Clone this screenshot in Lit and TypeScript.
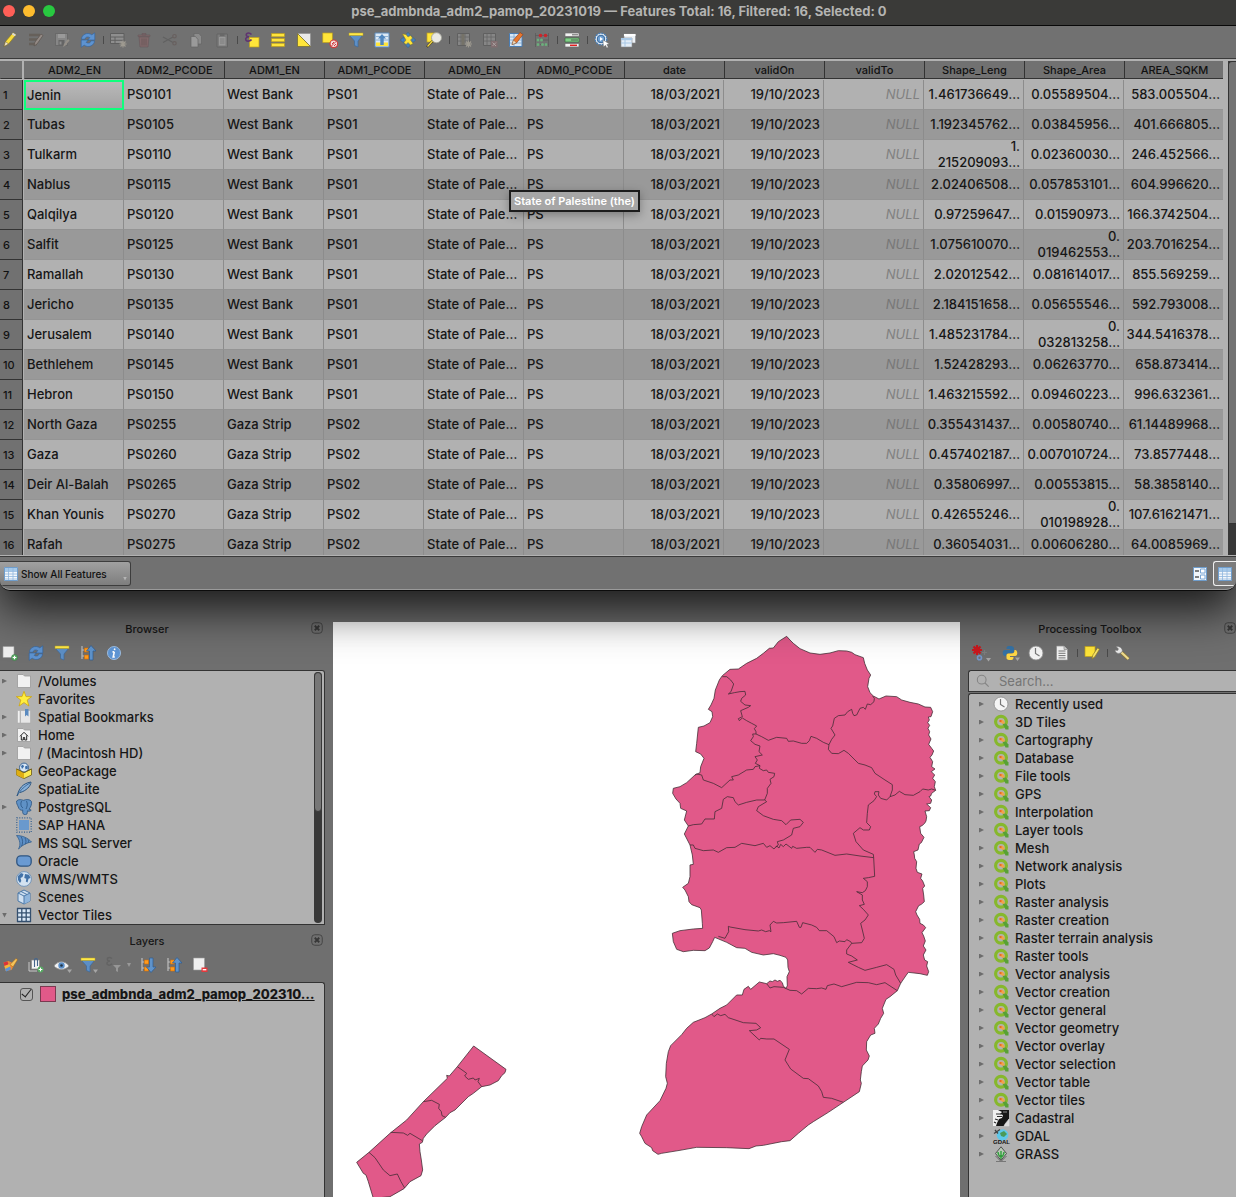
import { LitElement, html, css, svg, nothing } from "lit";
import { customElement, property } from "lit/decorators.js";

const funnel = svg`<path d="M1.500 3.500h13L10 9v6l-3.500-1.500V9z" fill="#5d8fc6" stroke="#3c6899" stroke-width=".7"/><path d="M1 1h14v2.500H1z" fill="#ffe94a" stroke="#b9a020" stroke-width=".5"/>`;
const more = svg`<path d="M13 12.500h5L15.500 16z" fill="#a6a6a6"/>`;
const refresh = svg`<path d="M1.500 7.200C1.500 2.500 7.500-.3 11.800 2.800L14.800.8V8H7.800L9.800 5.600C7.500 4.200 5.500 5 4.900 7.200zM14.500 8.800c0 4.700-6 7.500-10.300 4.400L1.200 15.200V8H8.200L6.200 10.400c2.300 1.400 4.300.6 4.900-1.600z" fill="#5e93d0" stroke="#30629c" stroke-width=".6"/>`;
const branch = svg`<path d="M2 1v13M2 5h5M2 11h5" stroke="#bdbdbd" stroke-width="1.200" fill="none"/><path d="M4.500 3h4v4h-4zM4.500 10h4v4h-4z" fill="#ff9b1c" stroke="#d46b00" stroke-width=".6"/>`;
const arrowUp = svg`<path d="M11 .5L16 6h-3v9H9.500V6H6.500z" fill="#5f93cb" stroke="#2e5c91" stroke-width=".7"/>`;
const arrowDown = svg`<path d="M11 15.500L16 10h-3V1H9.500v9H6.500z" fill="#5f93cb" stroke="#2e5c91" stroke-width=".7"/>`;
const folder = svg`<path d="M1.500 1.500h5.500l1.500 1.500h6V14.500h-13z" fill="#f1f1f1" stroke="#999" stroke-width=".8"/>`;
const grid = svg`<path d="M1.500 1.500h13v13h-13z" fill="#f3f7fb" stroke="#6f9dcc"/><path d="M2 2h12v3H2z" fill="#a5c9ea"/><path d="M2 5.500h12M2 8h12M2 10.500h12M2 13h12" stroke="#8fb6de" stroke-width=".8"/><path d="M5.500 2v12M10 2v12" stroke="#8fb6de" stroke-width=".8"/>`;
const clock = svg`<circle cx="8" cy="8" r="7" fill="#f4f4f4" stroke="#8b8b8b" stroke-width=".8"/><path d="M7.500 3v5.500l4 2.500" fill="none" stroke="#777" stroke-width="1.200"/>`;
const yellow = (x: number, y: number, s: number) =>
  svg`<rect x=${x} y=${y} width=${s} height=${s} fill="#ffe53a" stroke="#c1a21a" stroke-width=".7"/>`;

const ICONS: Record<string, unknown> = {
  edit: svg`<path d="M2 14.500l1.500-5L11 .8l3 2L6.500 12z" fill="#f8dc3c" stroke="#8f7c22" stroke-width=".7"/><path d="M2 14.500l1.500-5L6.500 12z" fill="#f4e7c6" stroke="#5c5137" stroke-width=".5"/><path d="M11 .8l3 2-1.200 1.500-3-2z" fill="#d9d9d9"/>`,
  multi: svg`<path d="M1 3h11M1 7.500h10M1 12h8" stroke="#66605a" stroke-width="2.600"/><path d="M6 14l1-4 6-8 2 1.500L9 12z" fill="#948b86" stroke="#5b534e" stroke-width=".7"/>`,
  save: svg`<path d="M1.500 1.500h12v12h-12z" fill="#868686" stroke="#616161" stroke-width=".7"/><path d="M4 2h7v4H4z" fill="#9a9a9a"/><path d="M4.500 8h6v5.500h-6z" fill="#656565"/><path d="M5.500 9.500h2v3h-2z" fill="#8d8d8d"/><path d="M9 15l1-3 4-5 1.500 1.500-4 5z" fill="#948f88"/>`,
  refresh,
  addRow: svg`<path d="M.5 1.500h13.500v10H.5z" fill="#8e8e8e" stroke="#5e5e5e"/><path d="M1 5h13M1 8.300h13M5 5v6.500" stroke="#616161" stroke-width="1"/><path d="M13 8.500v7M9.500 12h7M10.500 9.500l5 5M15.500 9.500l-5 5" stroke="#9e9a90" stroke-width="1.200"/>`,
  trash: svg`<path d="M3 5h10l-1 10H4zM2 3h12v1.500H2zM6 1.500h4V3H6z" fill="#81686a" stroke="#67575a" stroke-width=".6"/><path d="M6 6.500v7M8 6.500v7M10 6.500v7" stroke="#655557" stroke-width=".8"/>`,
  cut: svg`<path d="M1 5l10 5.500M1 10.500L11 5" stroke="#616161" stroke-width="1.200"/><circle cx="12.500" cy="4.200" r="1.700" fill="none" stroke="#68605f" stroke-width="1.200"/><circle cx="12.500" cy="11.300" r="1.700" fill="none" stroke="#68605f" stroke-width="1.200"/>`,
  copy: svg`<path d="M6 1.500h5l2.500 3V12H6z" fill="#8b8b8b" stroke="#666" stroke-width=".7"/><path d="M3 4.500h4.500l2.500 3V15H3z" fill="#9a9a9a" stroke="#666" stroke-width=".7"/>`,
  paste: svg`<path d="M3 2h10.500v13H3z" fill="#7c7c7c" stroke="#646464"/><path d="M5 5h6.500v8.500H5z" fill="#989898"/><path d="M6 1h4.500v3H6z" fill="#686868"/><path d="M6 7h4.500M6 9h4.500M6 11h4.500" stroke="#777" stroke-width=".8"/>`,
  expr: svg`${yellow(5.5, 5.5, 9.5)}<path d="M7.500 2.500C5-.2 1.200 1.200 2.500 3.700c.6.9 1.700 1 2.600 1C3 5 .8 6 2 8.200 3.500 10 6.500 9 7.500 7.500" fill="none" stroke="#5f3470" stroke-width="1.600"/>`,
  all: svg`<path d="M1.500 1.500h13v3.300h-13zM1.500 6.400h13v3.300h-13zM1.500 11.300h13v3.300h-13z" fill="#ffe53a" stroke="#b99c1e" stroke-width=".7"/>`,
  invert: svg`<path d="M1.500 1.500h13v13z" fill="#e9e9e9" stroke="#8c8c8c" stroke-width=".6"/><path d="M1.500 1.500v13h13z" fill="#ffe53a" stroke="#6d6530" stroke-width=".7"/>`,
  deselect: svg`${yellow(0.8, 1, 9.5)}<circle cx="11.800" cy="11.800" r="3.800" fill="#f3dede" stroke="#cf3b3b" stroke-width="1.200"/><path d="M9.200 14.300l5.200-5.200M10 12l2-2M12 14l2-2" stroke="#cf3b3b" stroke-width="1"/>`,
  funnel,
  top: svg`<path d="M1 1h14v14H1z" fill="#dce9f5" stroke="#5d8cbd"/><path d="M1.500 4.500h13M1.500 8h13" stroke="#8fb2d4"/><path d="M2 10.500h12v3.500H2z" fill="#ffe53a"/><path d="M8 2l4 4.500H9.700V13H6.300V6.500H4z" fill="#4f87c0"/>`,
  pan: svg`<path d="M8 .3L11.200 4H4.800zM8 15.700L11.200 12H4.800zM.3 8L4 4.800v6.400zM15.700 8L12 4.800v6.400z" fill="#4a80b8" stroke="#2d5c8f" stroke-width=".5"/><path d="M6.500 3.500h3v9h-3zM3.500 6.500h9v3h-9z" fill="#4a80b8"/><path d="M2.500 2l3.500.5 2 2.500 2.500-1.500L12.500 6l-2 2 2.500 3.500-2.500 1.500L8 10.500 6 12.500 4 10.500 6 8z" fill="#ffe53a" stroke="#8a7b1e" stroke-width=".5"/>`,
  zoom: svg`${yellow(1, 1, 9)}<path d="M1 15l6.500-7" stroke="#3b3522" stroke-width="2.400"/><path d="M1.500 14.500l5-5.500" stroke="#f5db46" stroke-width="1.300"/><circle cx="10.500" cy="5.700" r="5" fill="#e9e9e2" stroke="#a3a39a" stroke-width=".9"/>`,
  newField: svg`<path d="M1.500 1.500h12v12h-12z" fill="#868686" stroke="#606060"/><path d="M5 2v11M9 2v11M2 5h11M2 9h11" stroke="#666" stroke-width=".8"/><path d="M5.500 2h3v11h-3z" fill="#757268"/><path d="M12.500 8.500v7M9 12h7M10 9.500l5 5M15 9.500l-5 5" stroke="#9d998f" stroke-width="1.200"/>`,
  delField: svg`<path d="M1.500 1.500h12v12h-12z" fill="#868686" stroke="#606060"/><path d="M5 2v11M9 2v11M2 5h11M2 9h11" stroke="#666" stroke-width=".8"/><path d="M9 9h6.500v6.500H9z" fill="#826e70"/><path d="M10.500 10.500l3.500 3.500M14 10.500l-3.500 3.500" stroke="#aaa2a1"/>`,
  organize: svg`<path d="M1.500 1.500h12.500v13H1.500z" fill="#d7e7f6" stroke="#4a7db3"/><path d="M2 5h12M2 8h12M2 11h12M6 2v12" stroke="#7ba6d1" stroke-width=".8"/><path d="M4 12.500l1.500-4.500L12 .5l3 2L8.500 11z" fill="#e8762d" stroke="#8a3b10" stroke-width=".6"/><path d="M4 12.500l1.500-4.500 3 3z" fill="#f2dfc2" stroke="#6b4c30" stroke-width=".4"/>`,
  calc: svg`<path d="M1 3.500h14M1 8h14M1 12.500h14M1.500 1v14M14.500 1v14" stroke="#5c5c5c" stroke-width=".8"/><circle cx="6.500" cy="3.500" r="1.800" fill="#c9262b"/><circle cx="11.500" cy="3.500" r="1.800" fill="#c9262b"/><circle cx="4" cy="8" r="1.500" fill="#6cae7c"/><circle cx="7.500" cy="8" r="1.500" fill="#6cae7c"/><circle cx="4" cy="12.500" r="1.500" fill="#6cae7c"/><circle cx="8.500" cy="12.500" r="1.500" fill="#6cae7c"/><circle cx="12" cy="12.500" r="1.500" fill="#6cae7c"/>`,
  cond: svg`<path d="M1 1h14v3.500H1z" fill="#f1f1f1" stroke="#6d6d6d" stroke-width=".7"/><path d="M1 6h14v4H1z" fill="#7fcf86" stroke="#3d6b42" stroke-width=".7"/><path d="M1 11.500h14V15H1z" fill="#f1f1f1" stroke="#6d6d6d" stroke-width=".7"/><path d="M8 2.800h6M7 8h7" stroke="#444" stroke-width=".8"/><path d="M6 13.300h7" stroke="#e02020" stroke-width="1.500"/>`,
  actions: svg`<circle cx="7" cy="7" r="5.800" fill="#eef3f8" stroke="#4e80b5" stroke-width="1.400" stroke-dasharray="2 1"/><circle cx="7" cy="7" r="3.800" fill="#6ea1d5" stroke="#35669a"/><path d="M6 5l3 2-3 2z" fill="#fff"/><path d="M9 8l6.500 4-2.700.6 1.500 2.600-1.500.7-1.300-2.600L9.500 15z" fill="#fff" stroke="#555" stroke-width=".4"/>`,
  dockWin: svg`<path d="M4 2h11.500v9H4z" fill="#eef3f8" stroke="#8a8a8a" stroke-width=".6"/><path d="M4 2h11.500v2H4z" fill="#fff"/><path d="M1 6h11v9H1z" fill="#e4eef8" stroke="#8a8a8a" stroke-width=".6"/><path d="M1 6h11v2.200H1z" fill="#a8c8e6"/><path d="M1 11h11M5 8v7" stroke="#a8c8e6"/>`,
  table: grid,
  form: svg`<path d="M1.500 1.500h13v13h-13z" fill="#f1f5f9" stroke="#6f9dcc"/><path d="M3 5h4M3 11h4" stroke="#555" stroke-width="1.300"/><path d="M8.500 3h4.500v4H8.500zM8.500 9h4.500v4H8.500z" fill="#fff" stroke="#7aa7d6"/>`,
  addSel: svg`<path d="M1 1.500h11v11H1z" fill="#efefef" stroke="#9c9c9c" stroke-width=".6"/><circle cx="12.500" cy="12.500" r="3" fill="#57ab63" stroke="#3b7d46" stroke-width=".5"/><path d="M12.500 10.700v3.600M10.700 12.500h3.600" stroke="#fff" stroke-width="1.200"/>`,
  remove: svg`<path d="M1.500 1h11v12h-11z" fill="#efefef" stroke="#9c9c9c" stroke-width=".6"/><path d="M9.500 10.500h6v4.500h-6z" fill="#e5393d"/><path d="M10.700 12.700h3.600" stroke="#fff" stroke-width="1.300"/>`,
  collapse: svg`${branch}${arrowUp}`,
  expand: svg`${branch}${arrowDown}`,
  info: svg`<circle cx="8" cy="8" r="6.500" fill="#5f96d6" stroke="#9ebde0"/><path d="M8.800 3.500l-.3 1.700M8.300 6.800L7.200 12h1.600M6.500 6.900h1.800" stroke="#fff" stroke-width="1.600" fill="none"/>`,
  style: svg`<path d="M1.500 5.500l5-1.500 6 3-3 6-6 1z" fill="#ec8a3b"/><path d="M1.500 5.500l4-1 1 3-4 1.500z" fill="#d9333a"/><path d="M2.500 9l5-2 1 3-5 2z" fill="#f2b53b"/><path d="M3 12l5-2.500 1 3-5 2z" fill="#5b93d4"/><path d="M8 7.500L14 1.500l1.500 1.200L11 10z" fill="#f5c35a" stroke="#a35c0c" stroke-width=".5"/>`,
  group: svg`<path d="M1 5v9h8" fill="none" stroke="#c9c9c9"/><path d="M3.500 3h8v9h-8z" fill="#f4f4f4" stroke="#888" stroke-width=".7"/><path d="M6.500 10V3c0-1.800 3-1.800 3 0v6" fill="none" stroke="#44658c" stroke-width="1.100"/><circle cx="12.500" cy="12.500" r="3" fill="#57ab63"/><path d="M12.500 10.700v3.600M10.700 12.500h3.600" stroke="#fff"/>`,
  eye: svg`<path d="M0 9c3-5 11-6 15 0-4 4.500-11 4.500-15 0z" fill="#f1f1f1" stroke="#8d8d8d" stroke-width=".8"/><circle cx="7.500" cy="8.500" r="3.200" fill="#5b8fc9"/><circle cx="7.500" cy="8.500" r="1.300" fill="#234"/>${more}`,
  filterMore: svg`${funnel}${more}`,
  exprOff: svg`<path d="M6 1.500C3-.5.5 1 1.700 3.200c.6.7 1.500.8 2.300.8C2 4.300.3 5.500 1.200 7.300 2.700 9 5 8 6 6.700" fill="none" stroke="#636363" stroke-width="1.500"/><path d="M7 8h8l-3 3v4l-2-1v-3z" fill="#969696"/>`,
  gears: svg`<path d="M5 0v10M0 5h10M1.500 1.500l7 7M8.500 1.500l-7 7" stroke="#c9181e" stroke-width="2.200"/><circle cx="5" cy="5" r="3.200" fill="#c9181e"/><circle cx="7.500" cy="12.800" r="2" fill="none" stroke="#7396cc" stroke-width="1.600"/><path d="M12.500 5v5M10 7.500h5" stroke="#7d7d7d" stroke-width="1.200"/><path d="M14 13h5l-2.500 3.500z" fill="#a6a6a6"/>`,
  python: svg`<path d="M7.500 1C4.500 1 4.500 2.500 4.500 4h3.500v1H3C1 5 .5 7 .8 8.500 1 10.500 2 11 4 11c0-2 .8-3 3-3h3c1.500 0 2-1 2-2V3.500C12 1.500 10 1 7.500 1z" fill="#3572a5"/><path d="M8.500 15c3 0 3-1.500 3-3H8v-1h5c2 0 2.500-2 2.200-3.500C15 5.500 14 5 12.500 5c0 2.500-.8 3.500-3 3.500h-3c-1.500 0-2 1-2 2V13c0 1.500 1.500 2 4 2z" fill="#ffd845"/>${more}`,
  clock,
  doc: svg`<path d="M2.500 1H10l3.500 3.500V15h-11z" fill="#f3f3f3" stroke="#8f8f8f" stroke-width=".7"/><path d="M10 1v3.500h3.500" fill="#ccc" stroke="#8f8f8f" stroke-width=".7"/><path d="M4.500 6h7M4.500 8.300h7M4.500 10.600h7M4.500 12.900h7" stroke="#777" stroke-width="1"/>`,
  editPlace: svg`${yellow(1, 1.5, 10)}<path d="M8 14l.8-4L13.500 3l2 1.300-4.700 7.500z" fill="#f7e36a" stroke="#8f7c22" stroke-width=".7"/>`,
  wrench: svg`<path d="M7.500 7.500L14.500 14" stroke="#8f7a35" stroke-width="3.400"/><path d="M7.500 7.500L14.500 14" stroke="#f0dd90" stroke-width="2.200"/><path d="M2 1.500l2.500 2.300-.8 1.700-2.700-.3C1.500 8 4 9 6.500 8l1.800-1.800C8.500 3.500 6 1 2 1.500z" fill="#ececec" stroke="#7e7e7e" stroke-width=".5"/>`,
  folder,
  star: svg`<path d="M8 .3l2 5.300h5.700L11.200 9l1.700 6L8 11.600 3.100 15l1.700-6L.3 5.600H6z" fill="#ffee3e" stroke="#cfa60d" stroke-width=".8"/>`,
  bookmark: svg`<path d="M1.500 1.500h2.500v12.500H1.500z" fill="#f1f1f1" stroke="#a5a5a5" stroke-width=".5"/><path d="M4.500 1.500H14.500V14h-10z" fill="#e6e6e6" stroke="#a5a5a5" stroke-width=".5"/><path d="M9 0h3.500v7.500L10.700 6 9 7.500z" fill="#5a8abf"/>`,
  home: svg`${folder}<path d="M4 9.300L8 5.300l4 4M5.300 8.500V13h2v-2.500h1.400V13h2V8.500" fill="none" stroke="#222" stroke-width="1"/>`,
  gpkg: svg`<path d="M.5 6L8 9.500 15.500 6v6L8 15.600.5 12z" fill="#fbe94f" stroke="#6c5a16" stroke-width=".8"/><path d="M.5 6L8 9.500v6L.5 12z" fill="#dfae13"/><circle cx="8" cy="4.600" r="4.500" fill="#d8e6f4" stroke="#2f5a8d" stroke-width=".9"/><path d="M5 3l2-1.500 1 2L6 6zM9 3.500l2.500-1 .5 3-2.500 1z" fill="#3a6ca7"/><path d="M.5 6L8 9.500 15.500 6" fill="none" stroke="#6c5a16" stroke-width=".8"/>`,
  feather: svg`<path d="M1 15C3 8 6 2.500 15 1c0 4-5 9-11 10.500" fill="#87b1dc" stroke="#2d557f" stroke-width="1"/><path d="M1 15C5 8 9 5 14 2" stroke="#2d557f" stroke-width=".8" fill="none"/>`,
  pg: svg`<path d="M.6 2C2.600-.2 5.500.8 7.500 1.300 10 .2 14.300.2 15.400 2.400c.7 3-.9 6-2.400 8 1 0 2.200.3 2.200.8-1.500 1.400-3.200 1.100-3.700.6L11 15c-2 1.200-4.300.4-4.300-1.500V11c-2 .8-3.700-.5-4.400-3C1.500 6 .1 4 .6 2z" fill="#5f91c6" stroke="#2b5482" stroke-width=".8"/><path d="M5.500 2c-1.300 3-.5 6 1.500 7M10.500 2c1.500 3 .5 6-.5 8" fill="none" stroke="#2b5482" stroke-width=".8"/>`,
  hana: svg`<path d="M3 3h10v10H3z" fill="#6a99cd"/><path d="M.8.8h14.400v14.400H.8z" fill="none" stroke="#345f8f" stroke-width="1.200" stroke-dasharray="1 1.500"/>`,
  mssql: svg`<path d="M.5.500c6 0 11.500 2.500 15 6.500-4 .5-9.500 3-13 7C5 9.500 4 5 .5.500z" fill="#5c8fc7" stroke="#355f8d" stroke-width=".8"/><path d="M5 1.500c2 3 2 7 .5 10M9 3c1.300 2 1.300 5 0 6.500M12 4.500c.7 1 .7 2.500 0 3.500" stroke="#2f5682" fill="none" stroke-width=".8"/>`,
  oracle: svg`<rect x=".8" y="2.800" width="14.400" height="10.400" rx="4" fill="#6a9ad2" stroke="#315680" stroke-width="1.300"/>`,
  globe: svg`<circle cx="8" cy="8" r="7.400" fill="#d3e2f1" stroke="#6189b4" stroke-width=".8"/><path d="M2 5l3-3 2.500 1L6.500 6l-2 1 .8 3-1.300 2-2-3zM9 3l4 .8L14.500 7l-2 .8-1 3.700-1.700-1 .5-2.700-2-.8z" fill="#4272a8"/>`,
  cube: svg`<path d="M8 1l6 3v8l-6 3-6-3V4z" fill="#cfe0f1" stroke="#4c79a8" stroke-width="1"/><path d="M8 7l6-3v8l-6 3z" fill="#8fb5dc"/><path d="M2 4l6 3 6-3M8 7v8M5 2.500l6 3" fill="none" stroke="#4c79a8"/>`,
  tiles: svg`<path d="M1.500 1.500h13v13h-13z" fill="#dbe9f7"/><path d="M1.500 1v14M5.800 1v14M10.200 1v14M14.500 1v14M1 1.500h14M1 5.800h14M1 10.200h14M1 14.500h14" stroke="#35506f" stroke-width="1.300"/>`,
  qgis: svg`<circle cx="8" cy="7.800" r="5.400" fill="none" stroke="#86b82c" stroke-width="3.200"/><path d="M9.300 9.500h3.500l2.700 3v2.900h-3z" fill="#58a135"/><path d="M6.500 5.800h3.200l1.800 2.200v1.800H9.500L6.500 8z" fill="#f2a24a"/><path d="M6.500 6h2v2h-2z" fill="#ea6a22"/>`,
  cadastral: svg`<path d="M0 0h16v16H0z" fill="#161616"/><path d="M0 0h5l4 2-2 2 3 1-1 3-3 1-2 4-1 3H0z" fill="#f0f0f0"/><path d="M3 4h5M4 6.500h5M2 9l3 1M1 12l2 1" stroke="#2a2a2a" stroke-width="1.200"/><path d="M10 2h4M12 14l4-5v7h-5z" stroke="#ddd" fill="#ddd" stroke-width=".6"/>`,
  gdal: svg`<circle cx="9.500" cy="7" r="5.800" fill="#5fc8ea"/><path d="M7 5l4-2 3 3-3 3-3-1z" fill="#4a9a58"/><path d="M1 5.500l6-4M2 2l3 3.500" stroke="#444" stroke-width="1.300"/><text x="0" y="15.700" font-family="Liberation Sans" font-size="6" font-weight="700" fill="#111">GDAL</text>`,
  grass: svg`<path d="M8 .8l5.500 6.700L8 14.300 2.500 7.500z" fill="#b9c9b6" stroke="#444" stroke-width=".9"/><path d="M8 13V5M8 11C6 10 5 8 5 6M8 11c2-1 3-3 3-5" stroke="#2f9e3c" stroke-width="1.400" fill="none"/><path d="M2.500 10L8 15.500l5.500-5.500" stroke="#555" fill="none" stroke-width=".8"/><path d="M3 15.500h10" stroke="#777"/>`,
  search: svg`<circle cx="6.500" cy="6.500" r="5" fill="none" stroke="#858585" stroke-width="1.200"/><path d="M10 10l4.500 4.500" stroke="#858585" stroke-width="1.300"/>`,
  close: svg`<rect x="1" y="1" width="14" height="14" rx="4" fill="none" stroke="#444" stroke-width="1.300"/><path d="M5 5l6 6M11 5l-6 6" stroke="#363636" stroke-width="2.400"/>`,
};

@customElement("qg-icon")
class QgIcon extends LitElement {
  @property() name = "";
  static styles = css`
    :host { display: inline-flex; flex: none; width: 16px; height: 16px; }
    svg { width: 100%; height: 100%; overflow: visible; }
  `;
  render() {
    return html`<svg viewBox="0 0 16 16" aria-hidden="true">${ICONS[this.name] ?? nothing}</svg>`;
  }
}

/* Item tokens: "|" separator line, "_" blank gap, "." drop-down marker, otherwise an icon name. */
@customElement("qg-toolbar")
class QgToolbar extends LitElement {
  @property({ attribute: false }) items: string[] = [];
  static styles = css`
    :host { display: block; overflow: hidden; }
    .bar { display: flex; align-items: center; height: 26px; margin-left: -3px; }
    .tool { display: flex; justify-content: center; align-items: center; width: 26px; height: 26px; padding: 0; border: 0; background: none; }
    .sep, .gap { width: 4px; display: flex; justify-content: center; }
    .sep::before { content: ""; width: 1px; height: 8px; background: #4a4a4a; }
    .dot { width: 4px; height: 4px; margin-right: 4px; clip-path: polygon(0 0, 100% 0, 50% 100%); background: #999; }
  `;
  private item(i: string) {
    if (i === "|") return html`<span class="sep"></span>`;
    if (i === "_") return html`<span class="gap"></span>`;
    if (i === ".") return html`<span class="dot"></span>`;
    return html`<button class="tool" aria-label=${i}><qg-icon name=${i}></qg-icon></button>`;
  }
  render() {
    return html`<div class="bar" role="toolbar">${this.items.map((i) => this.item(i))}</div>`;
  }
}

interface Node { label: string; icon: string; state: "closed" | "open" | "leaf"; }

@customElement("qg-tree")
class QgTree extends LitElement {
  @property({ attribute: false }) nodes: Node[] = [];
  static styles = css`
    :host { display: block; min-width: 0; flex: 1; font: 500 13px/18px Inter, "Liberation Sans", sans-serif; color: #161616; }
    .list { list-style: none; margin: 0; padding: 0; }
    .node { display: flex; align-items: center; height: 18px; white-space: nowrap; }
    .mark { flex: none; width: 5px; height: 5px; margin: 0 9px 0 2px; }
    .closed { background: #6c6c6c; clip-path: polygon(0 0, 100% 50%, 0 100%); }
    .open { background: #6c6c6c; clip-path: polygon(0 0, 100% 0, 50% 100%); }
    .label { margin-left: 6px; }
  `;
  render() {
    return html`<ul class="list" role="tree">
      ${this.nodes.map(
        (n) => html`<li class="node" role="treeitem">
          <span class="mark ${n.state}"></span><qg-icon name=${n.icon}></qg-icon><span class="label">${n.label}</span>
        </li>`
      )}
    </ul>`;
  }
}

const COLUMNS = ["ADM2_EN", "ADM2_PCODE", "ADM1_EN", "ADM1_PCODE", "ADM0_EN", "ADM0_PCODE", "date", "validOn", "validTo", "Shape_Leng", "Shape_Area", "AREA_SQKM"];

const FEATURES: [string, string, string, string, string][] = [
  ["Jenin", "PS0101", "1.461736649…", "0.05589504…", "583.005504…"],
  ["Tubas", "PS0105", "1.192345762…", "0.03845956…", "401.666805…"],
  ["Tulkarm", "PS0110", "1.\n215209093…", "0.02360030…", "246.452566…"],
  ["Nablus", "PS0115", "2.02406508…", "0.057853101…", "604.996620…"],
  ["Qalqilya", "PS0120", "0.97259647…", "0.01590973…", "166.3742504…"],
  ["Salfit", "PS0125", "1.075610070…", "0.\n019462553…", "203.7016254…"],
  ["Ramallah", "PS0130", "2.02012542…", "0.081614017…", "855.569259…"],
  ["Jericho", "PS0135", "2.184151658…", "0.05655546…", "592.793008…"],
  ["Jerusalem", "PS0140", "1.485231784…", "0.\n032813258…", "344.5416378…"],
  ["Bethlehem", "PS0145", "1.52428293…", "0.06263770…", "658.873414…"],
  ["Hebron", "PS0150", "1.463215592…", "0.09460223…", "996.632361…"],
  ["North Gaza", "PS0255", "0.355431437…", "0.00580740…", "61.14489968…"],
  ["Gaza", "PS0260", "0.457402187…", "0.007010724…", "73.8577448…"],
  ["Deir Al-Balah", "PS0265", "0.35806997…", "0.00553815…", "58.3858140…"],
  ["Khan Younis", "PS0270", "0.42655246…", "0.\n010198928…", "107.61621471…"],
  ["Rafah", "PS0275", "0.36054031…", "0.00606280…", "64.0085969…"],
];

@customElement("qg-attribute-window")
class QgAttributeWindow extends LitElement {
  static styles = css`
    :host { display: block; position: relative; z-index: 2; font: 500 13px/16px Inter, "Liberation Sans", sans-serif; color: #161616; background: #717171; border-bottom: 1px solid #0c0c0c; border-radius: 0 0 10px 10px; box-shadow: 0 18px 46px rgba(0, 0, 0, 0.78); }
    .titlebar { display: flex; align-items: center; height: 25px; padding: 0 3px; background: #3a3a38; border-bottom: 1px solid #080808; }
    .light { width: 12px; height: 12px; margin: 0 8px 4px 0; border-radius: 50%; padding: 0; border: 0; }
    .red { background: #ff5f57; }
    .amber { background: #febc2e; }
    .green { background: #28c840; }
    .title { flex: 1; margin: 0; padding: 0 58px 4px 0; text-align: center; font-size: 13px; font-weight: 700; line-height: 16px; color: #b4b4b2; white-space: nowrap; }
    .tools { padding: 1px 0 5px; }
    .view { display: flex; gap: 5px; height: 495px; padding-top: 2px; background: #b1b1b1; border-top: 1px solid #3a3a3a; border-bottom: 1px solid #3a3a3a; overflow: hidden; }
    .clip { flex: 1; height: 494px; overflow: hidden; }
    .grid { border-collapse: separate; border-spacing: 0; table-layout: fixed; width: 1224px; }
    .rowcol { width: 24px; }
    .grid th, .grid td { padding: 0; }
    .head { display: flex; align-items: center; justify-content: center; height: 17px; margin-bottom: 1px; background: #717171; border-bottom: 1px solid #333; border-left: 1px solid #333; font-size: 11px; font-weight: 500; color: #111; }
    .corner { border-left-color: #717171; margin-right: 2px; }
    .first { border-left-color: #717171; }
    .num { display: flex; align-items: center; height: 29px; margin-right: 1px; padding-left: 3px; background: #717171; border-bottom: 1px solid #333; border-right: 1px solid #333; font-size: 11px; font-weight: 500; color: #111; }
    .cell { display: flex; align-items: center; box-sizing: border-box; height: 30px; padding: 0 3px 2px; overflow: hidden; border-right: 1px solid #8c8c8c; border-bottom: 1px solid #949494; white-space: pre; background: #b1b1b1; }
    .even .cell { background: #999; }
    .right { justify-content: flex-end; text-align: right; }
    .null { color: #808080; font-style: italic; font-weight: 400; }
    .even .null { color: #777; }
    .cell.focus { border: 2px solid #0fff7c; padding: 0 1px 1px; background: linear-gradient(#b9b9b9, #a3a3a3); }
    .track { width: 8px; margin-bottom: 1px; background: #383838; }
    .thumb { height: 463px; background: #737373; border: 1px solid #333; border-right: 0; box-sizing: border-box; border-radius: 4px 0 0 2px; }
    .status { display: flex; align-items: center; gap: 5px; height: 31px; padding-top: 1px; border-bottom: 1px solid #9a9a9a; border-radius: 0 0 10px 10px; overflow: hidden; }
    .show { display: flex; align-items: center; gap: 2px; width: 131px; height: 25px; padding: 0 3px; border: 1px solid #3d3d3d; border-left: 0; border-radius: 0 3px 3px 0; background: linear-gradient(#a0a0a0, #7e7e7e); font: 500 10px/14px Inter, "Liberation Sans", sans-serif; color: #111; }
    .caret { width: 4px; height: 4px; margin: 10px 0 0 auto; background: #b5b5b5; clip-path: polygon(0 0, 100% 0, 50% 100%); }
    .spring { flex: 1; }
    .mode { display: flex; align-items: center; justify-content: center; width: 16px; height: 25px; padding: 0; border: 0; background: none; }
    .active { width: 23px; border: 1px solid #eee; border-right: 0; border-radius: 3px 0 0 3px; background: #7c7c7c; }
    .tip { position: absolute; left: 509px; top: 190px; box-sizing: border-box; height: 22px; padding: 0 3px; border: 2px solid #1c1c1c; background: #a6a6a6; box-shadow: 0 3px 10px rgba(0, 0, 0, 0.3); font-size: 11px; font-weight: 600; line-height: 18px; color: #fff; white-space: nowrap; }
  `;
  render() {
    return html`
      <header class="titlebar">
        <button class="light red" aria-label="Close"></button><button class="light amber" aria-label="Minimise"></button><button class="light green" aria-label="Zoom"></button>
        <h1 class="title">pse_admbnda_adm2_pamop_20231019 — Features Total: 16, Filtered: 16, Selected: 0</h1>
      </header>
      <qg-toolbar class="tools" .items=${"edit multi save refresh | addRow trash cut copy paste | expr all invert deselect funnel top pan zoom | newField delField organize calc | cond | actions dockWin".split(" ")}></qg-toolbar>
      <div class="view">
        <div class="clip">
          <table class="grid">
            <colgroup><col class="rowcol" />${COLUMNS.map(() => html`<col />`)}</colgroup>
            <thead><tr>
              <th><div class="head corner"></div></th>
              ${COLUMNS.map((c, i) => html`<th scope="col"><div class="head ${i === 0 ? "first" : ""}">${c}</div></th>`)}
            </tr></thead>
            <tbody>
              ${FEATURES.map((f, i) => html`<tr class=${i % 2 ? "even" : "odd"}>
                <th scope="row"><div class="num">${i + 1}</div></th>
                <td><div class="cell ${i === 0 ? "focus" : ""}">${f[0]}</div></td>
                <td><div class="cell">${f[1]}</div></td>
                <td><div class="cell">${i < 11 ? "West Bank" : "Gaza Strip"}</div></td>
                <td><div class="cell">${i < 11 ? "PS01" : "PS02"}</div></td>
                <td><div class="cell">State of Pale…</div></td>
                <td><div class="cell">PS</div></td>
                <td><div class="cell right">18/03/2021</div></td>
                <td><div class="cell right">19/10/2023</div></td>
                <td><div class="cell right null">NULL</div></td>
                ${f.slice(2).map((v) => html`<td><div class="cell right">${v}</div></td>`)}
              </tr>`)}
            </tbody>
          </table>
        </div>
        <div class="track"><div class="thumb"></div></div>
      </div>
      <footer class="status">
        <button class="show"><qg-icon name="table"></qg-icon>Show All Features<span class="caret"></span></button>
        <span class="spring"></span>
        <button class="mode" aria-label="Form view"><qg-icon name="form"></qg-icon></button>
        <button class="mode active" aria-label="Table view"><qg-icon name="table"></qg-icon></button>
      </footer>
      <div class="tip" role="tooltip">State of Palestine (the)</div>
    `;
  }
}

/* Boundaries are digitised on a grid of a third of a map unit. */
const WEST_BANK = "470,49 480,60 490,70 510,86 540,99 570,103 600,99 625,92 650,93 665,97 675,104 700,113 704,130 712,150 722,165 717,175 713,200 720,218 730,228 747,237 768,228 800,230 815,240 840,247 865,252 885,261 902,262 908,275 903,290 895,291 898,300 893,308 899,316 894,325 899,335 896,345 903,357 896,373 905,385 911,393 906,405 900,412 908,425 905,440 915,447 904,455 914,465 908,475 916,485 913,500 917,511 905,520 902,528 897,530 905,540 902,550 890,552 902,563 898,572 885,573 890,590 888,603 884,610 876,617 869,620 872,640 882,652 874,668 868,672 864,690 851,695 853,705 854,715 860,725 858,745 862,757 876,762 872,775 878,783 884,798 878,805 881,825 883,845 874,853 866,857 857,875 861,885 869,898 870,910 880,915 887,923 876,938 881,948 886,963 880,978 888,990 880,1005 884,1020 893,1025 890,1038 896,1055 892,1066 870,1061 835,1057 829,1065 812,1090 802,1112 780,1130 768,1138 757,1165 761,1180 752,1195 745,1212 733,1225 735,1240 722,1245 710,1265 709,1290 718,1308 714,1320 697,1338 694,1355 691,1380 694,1390 688,1415 640,1447 595,1477 550,1505 535,1515 505,1540 480,1562 455,1565 400,1576 378,1578 357,1586 290,1583 200,1582 150,1591 95,1600 84,1603 68,1592 65,1583 45,1570 35,1550 29,1540 35,1520 50,1485 90,1442 108,1405 112,1390 107,1370 109,1330 115,1295 122,1277 155,1244 170,1225 190,1207 225,1193 245,1182 270,1165 290,1155 305,1140 320,1125 337,1125 342,1108 355,1099 362,1108 388,1086 410,1091 420,1083 427,1085 435,1080 442,1084 450,1081 457,1088 460,1098 467,1105 472,1098 471,1070 478,1055 474,1042 473,1020 468,1012 450,1006 430,1001 400,1005 365,997 345,985 320,983 290,967 254,952 248,965 238,984 225,992 190,991 160,995 140,988 130,965 127,940 150,932 190,927 218,925 217,910 214,870 210,863 185,854 177,845 175,830 165,810 158,802 175,790 180,770 180,735 190,733 187,705 180,675 163,642 175,618 163,600 170,573 152,565 150,550 138,537 128,520 130,505 150,500 170,488 195,465 210,458 212,440 222,415 212,402 197,395 200,370 205,322 222,318 240,308 248,290 246,275 235,268 243,255 252,235 256,210 268,180 277,167 300,148 325,147 350,130 380,115 400,100 418,85 430,84 445,65";
const WB_LINES = [
  "277,170 290,170 302,180 311,192 303,215 295,222 313,218 330,215 345,214 347,225 335,235 332,244 345,255 362,257 355,262 332,272 337,290 325,296 328,302 337,294 350,302 365,310 380,318 373,326 378,335 378,342",
  "378,342 395,350 415,361 440,352 470,355 475,364 490,363 515,370 530,370 538,362 543,349 560,355 580,367 597,374 605,358 615,345 603,325 608,318 613,295 625,287 645,285 653,275 665,268 668,280 672,287 680,285 690,265 700,262 706,268 712,252 722,254 732,245 733,235 728,228",
  "597,374 595,388 605,400 625,401 642,391 655,400 685,430 705,435 725,443 735,460 765,480 787,494 787,510 780,530 795,525 808,514 825,524 850,526 870,515 878,507 895,510 905,507 917,511",
  "780,530 770,540 752,535 745,525 747,515 735,515 733,522 740,530 732,542 715,555 712,580 710,608 722,620 718,630 700,630 690,623 670,640 678,665 700,690 730,703 731,713 734,769 715,773 700,775 712,785 712,800 706,812 697,818 680,815 697,825 697,840 703,853 688,857 700,868 715,885 705,900 692,910 697,930 703,955 695,968 665,970 650,990 650,1002 665,1008 682,1020 655,1027 685,1042 705,1051 740,1042 770,1034 792,1048 797,1065 812,1090",
  "378,342 368,342 370,350 362,362 375,373 390,378 387,395 397,405 375,410 382,420 376,430 390,437 388,445 400,452 410,450 415,457 434,460 432,470 420,478 423,490 412,505 412,520 404,540 410,545 385,560 380,572 400,587 430,598 455,602 468,614 482,600 510,598 520,607 510,620 490,625 485,645 460,660 442,665 445,675 437,682",
  "390,437 375,440 370,448 350,450 325,465 305,470 310,480 300,480 275,503 250,490 220,480 215,465 200,462 195,465",
  "404,540 380,540 350,547 325,555 315,545 310,533 292,530 280,538 275,565 255,575 253,597 225,597 215,612 190,614 175,618",
  "180,675 190,675 195,685 220,692 250,690 265,697 290,683 315,682 335,670 375,677 400,670 410,682 420,677 432,687 440,678 447,684 452,673 460,680 468,672 485,685 488,679 500,685 530,682 540,682 555,697 562,688 575,690 615,706 650,702 690,708 731,713",
  "265,949 285,955 296,935 295,919 300,921 345,929 385,933 395,930 407,935 418,932 423,935 420,915 430,904 440,909 460,908 500,904 508,922 513,922 518,908 545,915 560,922 568,932 590,932 612,950 620,968 628,963 645,965 650,959 662,965 665,970",
  "410,1091 420,1104 432,1100 460,1102 480,1111 500,1112 515,1122 535,1105 560,1106 575,1104 588,1108 592,1097 612,1092 635,1100 680,1087 715,1088 740,1094 765,1088 802,1112",
  "245,1182 252,1190 262,1182 272,1187 285,1183 295,1193 340,1208 378,1210 392,1223 380,1230 358,1232 375,1248 388,1260 392,1255 410,1257 432,1257 478,1288 465,1320 482,1347 520,1375 535,1376 565,1398 575,1415 580,1432 605,1435 640,1447",
];
const GAZA = "401,48 498,118 495,128 485,137 475,152 450,165 425,170 400,190 385,200 345,240 330,248 317,262 285,287 260,312 250,325 247,337 238,342 240,365 244,390 248,420 243,437 210,455 192,476 150,500 100,505 85,455 78,435 70,430 50,397 87,367 150,310 200,270 250,215 322,145 320,136 328,138 352,110";
const GAZA_LINES = [
  "352,110 372,124 380,130 374,138 385,148 400,144 405,150 418,145 414,155 425,170",
  "250,215 275,211 298,223 296,235 304,245 306,257 317,262",
  "152,307 190,309 203,316 210,310 247,332",
  "87,367 105,383 130,420 150,437 172,432 183,455 194,474",
];

@customElement("qg-map")
class QgMap extends LitElement {
  static styles = css`
    :host { display: block; min-width: 0; min-height: 0; background: #fff; overflow: hidden; }
    svg { display: block; width: 100%; height: 100%; }
    .area { fill: #e15989; }
    .area, .line { stroke: #3c2a31; stroke-opacity: 0.85; stroke-width: 2.7; stroke-linejoin: round; }
    .line { fill: none; }
  `;
  render() {
    return html`<svg viewBox="333 622 627 575" preserveAspectRatio="xMidYMin meet" role="img" aria-label="Map canvas">
      <g transform="translate(630 620) scale(0.33333)">
        <polygon class="area" points=${WEST_BANK}></polygon>
        ${WB_LINES.map((p) => svg`<polyline class="line" points=${p}></polyline>`)}
      </g>
      <g transform="translate(340 1030) scale(0.33333)">
        <polygon class="area" points=${GAZA}></polygon>
        ${GAZA_LINES.map((p) => svg`<polyline class="line" points=${p}></polyline>`)}
      </g>
    </svg>`;
  }
}

const node = (label: string, icon: string, state: Node["state"] = "leaf"): Node => ({ label, icon, state });

const BROWSER: Node[] = [
  node("/Volumes", "folder", "closed"),
  node("Favorites", "star"),
  node("Spatial Bookmarks", "bookmark", "closed"),
  node("Home", "home", "closed"),
  node("/ (Macintosh HD)", "folder", "closed"),
  node("GeoPackage", "gpkg"),
  node("SpatiaLite", "feather"),
  node("PostgreSQL", "pg", "closed"),
  node("SAP HANA", "hana"),
  node("MS SQL Server", "mssql"),
  node("Oracle", "oracle"),
  node("WMS/WMTS", "globe"),
  node("Scenes", "cube"),
  node("Vector Tiles", "tiles", "open"),
];

const TOOLBOX: Node[] = [
  node("Recently used", "clock", "closed"),
  ...["3D Tiles", "Cartography", "Database", "File tools", "GPS", "Interpolation", "Layer tools", "Mesh", "Network analysis", "Plots", "Raster analysis", "Raster creation", "Raster terrain analysis", "Raster tools", "Vector analysis", "Vector creation", "Vector general", "Vector geometry", "Vector overlay", "Vector selection", "Vector table", "Vector tiles"].map((l) => node(l, "qgis", "closed")),
  node("Cadastral", "cadastral", "closed"),
  node("GDAL", "gdal", "closed"),
  node("GRASS", "grass", "closed"),
];

@customElement("app-root")
class AppRoot extends LitElement {
  static styles = css`
    :host { display: flex; flex-direction: column; height: 100vh; overflow: hidden; background: #6f6f6f; font: 500 13px/16px Inter, "Liberation Sans", sans-serif; color: #161616; }
    .work { flex: 1; min-height: 0; display: grid; grid-template-columns: 325px minmax(0, 1fr) 268px; column-gap: 8px; padding-top: 31px; }
    .side { display: flex; flex-direction: column; gap: 9px; min-height: 0; }
    .dock { display: flex; flex-direction: column; gap: 4px; min-height: 0; }
    .grow { flex: 1; }
    .bar { display: flex; align-items: center; height: 14px; }
    .name { flex: 1; margin: 0; text-align: center; font-size: 11px; line-height: 14px; font-weight: 500; }
    .close { display: flex; justify-content: flex-end; width: 31px; padding: 0 2px 2px 0; border: 0; background: none; }
    .close qg-icon { width: 12px; height: 12px; }
    .tight { width: 24px; padding-right: 0; }
    .box { display: flex; background: #b1b1b1; border: 1px solid #333; border-left: 0; border-radius: 0 3px 0 0; padding-top: 1px; }
    .scroll { width: 8px; margin: 0 2px 1px 0; background: #383838; border-radius: 4px; }
    .thumb { height: 140px; box-sizing: border-box; background: #777; border: 1px solid #383838; border-radius: 4px; }
    .layers { flex: 1; padding-top: 0; border-bottom: 0; }
    .layer { display: flex; align-items: center; width: 100%; height: 22px; padding-left: 20px; }
    .check { appearance: none; display: grid; place-items: center; width: 13px; height: 13px; margin: 0 7px 0 0; border: 1px solid #555; border-radius: 3px; }
    .check:checked::after { content: ""; width: 4px; height: 9px; margin-top: -4px; border: solid #222; border-width: 0 1px 1px 0; transform: rotate(38deg); }
    .swatch { width: 14px; height: 14px; margin-right: 6px; background: #e15989; border: 1px solid #7a3a50; }
    .layername { flex: 1; font-weight: 800; text-decoration: underline; white-space: nowrap; }
    .find { display: flex; align-items: center; gap: 9px; height: 20px; padding-left: 7px; border: 1px solid #333; border-right: 0; border-radius: 3px 0 0 0; background: #b1b1b1; }
    .find qg-icon { width: 14px; height: 14px; }
    .input { flex: 1; min-width: 0; height: 20px; padding: 0; border: 0; outline: 0; background: none; font: 400 13px/20px Inter, "Liberation Sans", sans-serif; color: #222; }
    .input::placeholder { color: #757575; }
    .tree { flex: 1; margin-top: -3px; border: 1px solid #333; border-right: 0; border-bottom: 0; border-radius: 3px 0 0 0; padding-left: 8px; overflow: hidden; }
    .inset { padding-left: 2px; }
  `;

  private dock(title: string, edge = false) {
    return html`<div class="bar">
      <h2 class="name">${title}</h2>
      <button class="close ${edge ? "tight" : ""}" aria-label="Close ${title}"><qg-icon name="close"></qg-icon></button>
    </div>`;
  }

  render() {
    return html`
      <qg-attribute-window></qg-attribute-window>
      <main class="work">
        <div class="side">
          <section class="dock">
            ${this.dock("Browser")}
            <qg-toolbar .items=${["addSel", "refresh", "funnel", "collapse", "info"]}></qg-toolbar>
            <div class="box"><qg-tree .nodes=${BROWSER}></qg-tree><div class="scroll"><div class="thumb"></div></div></div>
          </section>
          <section class="dock grow">
            ${this.dock("Layers")}
            <qg-toolbar .items=${["style", "group", "eye", "filterMore", "exprOff", ".", "expand", "collapse", "remove"]}></qg-toolbar>
            <div class="box layers">
              <label class="layer">
                <input class="check" type="checkbox" checked />
                <span class="swatch"></span>
                <span class="layername">pse_admbnda_adm2_pamop_202310…</span>
              </label>
            </div>
          </section>
        </div>
        <qg-map></qg-map>
        <section class="dock">
          ${this.dock("Processing Toolbox", true)}
          <qg-toolbar class="inset" .items=${["gears", "_", "python", "clock", "doc", "|", "editPlace", "|", "wrench"]}></qg-toolbar>
          <div class="find"><qg-icon name="search"></qg-icon><input class="input" type="search" placeholder="Search…" aria-label="Search" /></div>
          <div class="box tree"><qg-tree .nodes=${TOOLBOX}></qg-tree></div>
        </section>
      </main>
    `;
  }
}
